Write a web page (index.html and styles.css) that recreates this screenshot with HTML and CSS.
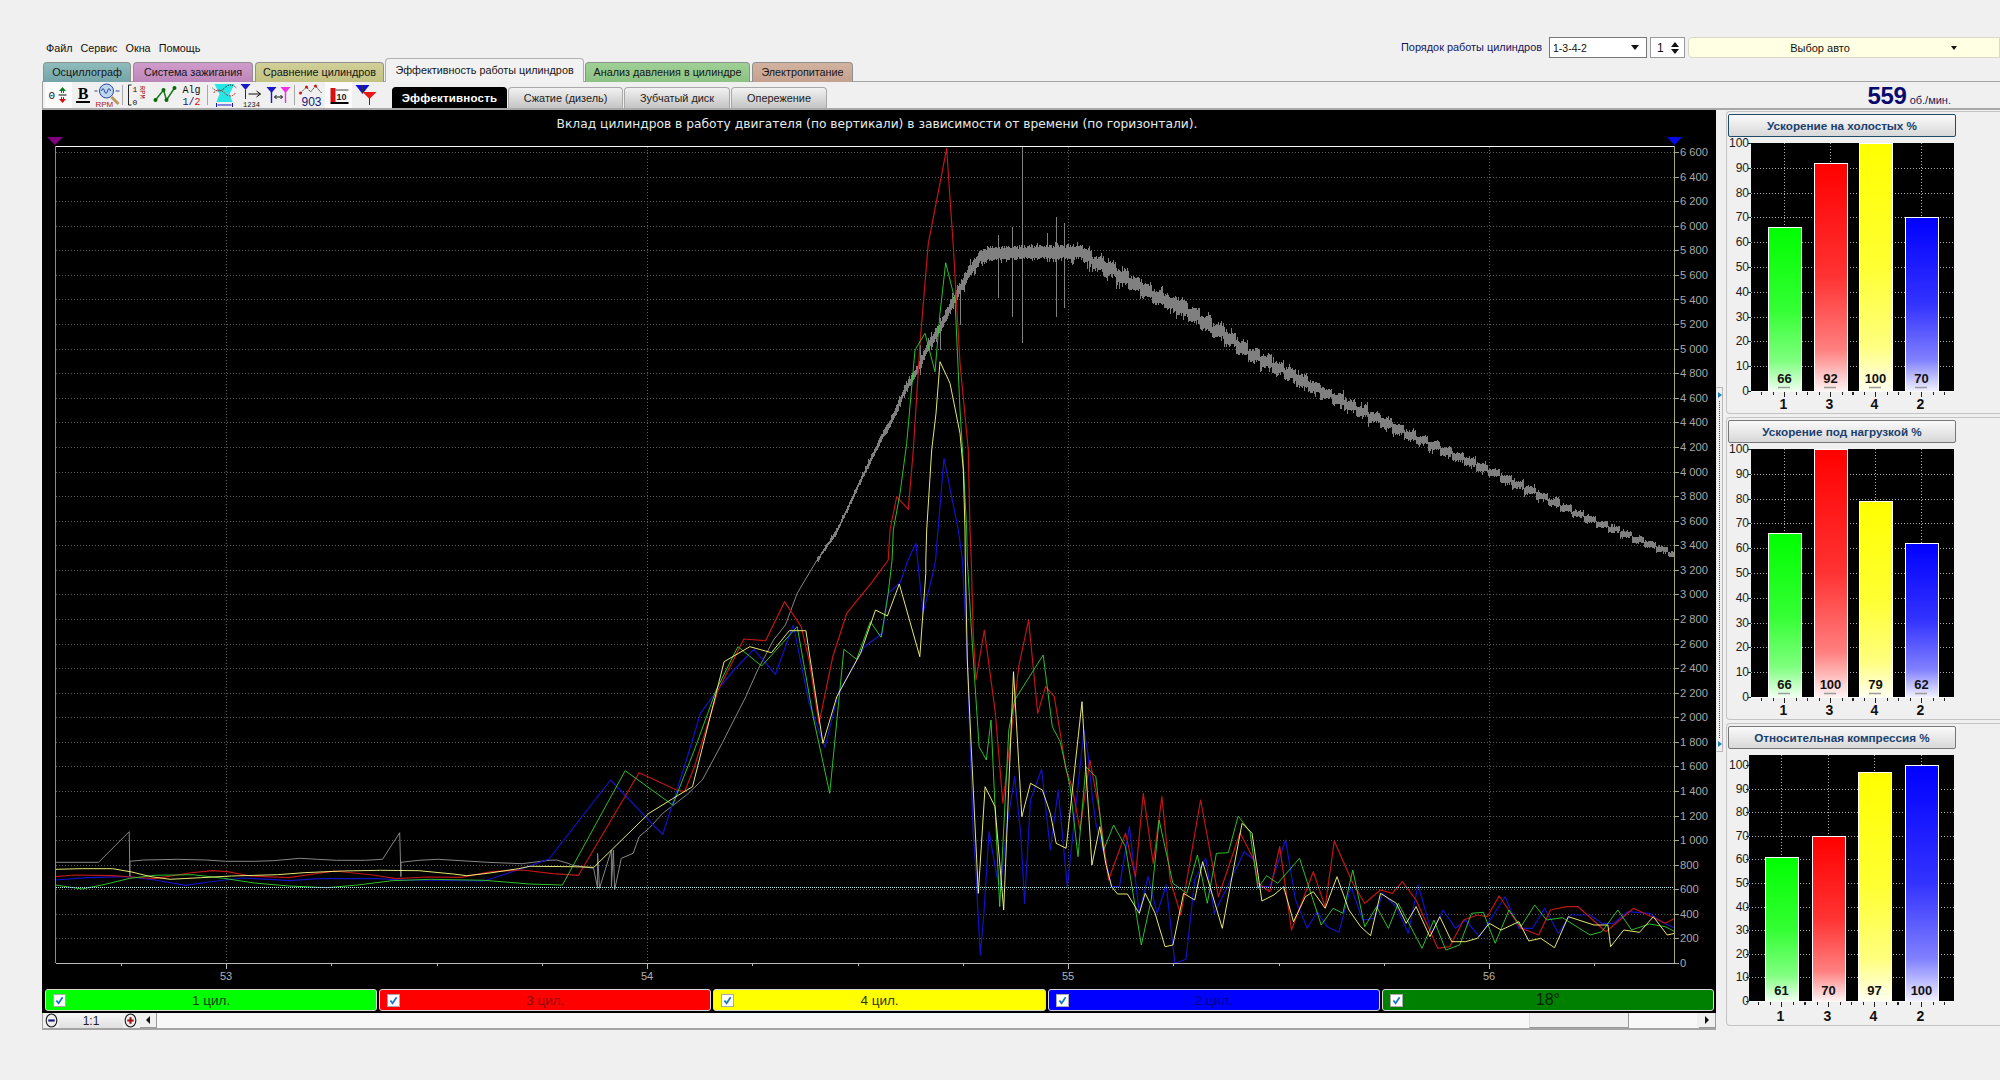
FILE: index.html
```html
<!DOCTYPE html>
<html lang="ru">
<head>
<meta charset="utf-8">
<title>Эффективность работы цилиндров</title>
<link rel="stylesheet" href="styles.css">
</head>
<body>
<div class="app">
  <header class="head">
    <div class="head-left">
      <nav class="menu"><span>Файл</span><span>Сервис</span><span>Окна</span><span>Помощь</span></nav>
      <div class="tabs">
        <div class="tab tab-osc">Осциллограф</div>
        <div class="tab tab-ign">Система зажигания</div>
        <div class="tab tab-cmp">Сравнение цилиндров</div>
        <div class="tab tab-active">Эффективность работы цилиндров</div>
        <div class="tab tab-prs">Анализ давления в цилиндре</div>
        <div class="tab tab-pwr">Электропитание</div>
      </div>
    </div>
    <div class="config">
      <span class="config-label">Порядок работы цилиндров</span>
      <div class="select"><span>1-3-4-2</span><i class="arrow-down"></i></div>
      <div class="spin"><span>1</span><div class="spin-btns"><i class="arrow-up"></i><i class="arrow-down"></i></div></div>
      <div class="car"><span class="car-text">Выбор авто</span><i class="arrow-down small"></i></div>
    </div>
  </header>

  <div class="toolrow">
    <div class="tools">
      <div class="tool on"><svg viewBox="0 0 26 26"><text x="3" y="17" class="ic-t">0</text><path d="M17 5l-3.500 4h7z" fill="#0a7a2a"/><path d="M17 21l-3.500-4h7z" fill="#d01010"/><path d="M16 9v2M18 9v2" stroke="#0a7a2a"/><path d="M13 13h8" stroke="#111"/><path d="M16 15v2M18 15v2" stroke="#d01010"/></svg></div>
      <div class="tool narrow"><svg viewBox="0 0 22 26"><text x="11" y="17" class="ic-b">B</text><path d="M4 20h14" stroke="#000" stroke-width="2"/></svg></div>
      <div class="tool"><svg viewBox="0 0 26 26"><path d="M17 15l7 7" stroke="#b89a60" stroke-width="3"/><circle cx="12" cy="9" r="7" fill="#bcd8ee" stroke="#30409a"/><path d="M0 9h3M21 9h4M7 9q1.500-5 3 0t3 0 3 0" fill="none" stroke="#30409a"/><text x="1" y="25" class="ic-rpm">RPM</text></svg></div>
      <i class="sep"></i>
      <div class="tool"><svg viewBox="0 0 26 26"><path d="M7 3H4v20h3" fill="none" stroke="#222"/><text x="8" y="10" class="ic-s">1</text><text x="8" y="23" class="ic-s">0</text><text transform="translate(15 4) rotate(90)" class="ic-rot">RPM</text></svg></div>
      <div class="tool"><svg viewBox="0 0 26 26"><path d="M4 18l8-10 3 10 8-12" fill="none" stroke="#1a7a1a" stroke-width="1.500"/><circle cx="4" cy="18" r="2" fill="#0a6a0a"/><circle cx="12" cy="8" r="2" fill="#0a6a0a"/><circle cx="15" cy="18" r="2" fill="#0a6a0a"/><circle cx="23" cy="6" r="2" fill="#0a6a0a"/></svg></div>
      <div class="tool"><svg viewBox="0 0 26 26"><text x="13" y="11" class="ic-alg">Alg</text><text x="13" y="23" class="ic-alg b">1/<tspan class="red">2</tspan></text></svg></div>
      <i class="sep gap-r"></i>
      <div class="tool"><svg viewBox="0 0 26 26"><path d="M3 2h20l-5 10 3 8H5l3-8z" fill="#26e6e6"/><path d="M1 6q6 6 12 0t12 0" fill="none" stroke="#111" stroke-dasharray="1 1"/><path d="M2 11q5-6 11 0t11 0" fill="none" stroke="#d02020" stroke-dasharray="2 1"/><path d="M5 21v4M21 21v4M6 23h14" stroke="#1818c0" fill="none"/></svg></div>
      <div class="tool"><svg viewBox="0 0 26 26"><path d="M2 2h10l-5 6z" fill="#1818c8"/><path d="M7 8v9" stroke="#1818c8"/><path d="M10 12h12M18 9l4 3-4 3" fill="none" stroke="#111"/><text x="13" y="25" class="ic-num">1234</text></svg></div>
      <div class="tool"><svg viewBox="0 0 26 26"><path d="M1 5h10l-5 6z" fill="#1818c8"/><path d="M6 10v11" stroke="#1818c8" stroke-width="1.400"/><path d="M15 5h10l-5 6z" fill="#f030e0"/><path d="M20 10v11" stroke="#f030e0" stroke-width="1.400"/><path d="M9 15h8M9 15l2-2M9 15l2 2M17 15l-2-2M17 15l-2 2" fill="none" stroke="#111"/></svg></div>
      <i class="sep gap-r"></i>
      <div class="tool"><svg viewBox="0 0 26 26"><path d="M2 11l6-6 4 5 5-6 6 7" fill="none" stroke="#444" stroke-dasharray="2 1"/><circle cx="2" cy="11" r="1.500" fill="#d01010"/><circle cx="8" cy="5" r="1.500" fill="#d01010"/><circle cx="17" cy="4" r="1.500" fill="#d01010"/><text x="13" y="24" class="ic-903">903</text></svg></div>
      <div class="tool on"><svg viewBox="0 0 26 26"><rect x="5" y="6" width="5" height="14" fill="#d81010"/><text x="11" y="18" class="ic-10">10</text><path d="M10 8h13" stroke="#444"/><path d="M5 21h18" stroke="#000" stroke-width="2"/></svg></div>
      <div class="tool"><svg viewBox="0 0 26 26"><path d="M3 3h14l-7 9z" fill="#1010d8"/><path d="M10 10h14l-7 7z" fill="#e81818"/><path d="M10 3v8M17 16v7" stroke="#333"/></svg></div>
    </div>
    <div class="subtabs">
      <div class="subtab active">Эффективность</div>
      <div class="subtab w1">Сжатие (дизель)</div>
      <div class="subtab w2">Зубчатый диск</div>
      <div class="subtab w3">Опережение</div>
    </div>
    <div class="rpm"><b>559</b> <span>об./мин.</span></div>
  </div>

  <main class="main">
    <section class="chart-panel">
      <svg id="plot" class="plot" viewBox="42 110 1674 879" preserveAspectRatio="none"></svg>
      <div class="legend">
        <div class="chip c-green"><i class="check"><svg viewBox="0 0 10 10"><path d="M1.500 5l2.500 3 4.500-6.500" fill="none" stroke="#1878c8" stroke-width="2"/></svg></i><span>1 цил.</span></div>
        <div class="chip c-red"><i class="check"><svg viewBox="0 0 10 10"><path d="M1.500 5l2.500 3 4.500-6.500" fill="none" stroke="#1878c8" stroke-width="2"/></svg></i><span>3 цил.</span></div>
        <div class="chip c-yellow"><i class="check"><svg viewBox="0 0 10 10"><path d="M1.500 5l2.500 3 4.500-6.500" fill="none" stroke="#1878c8" stroke-width="2"/></svg></i><span>4 цил.</span></div>
        <div class="chip c-blue"><i class="check"><svg viewBox="0 0 10 10"><path d="M1.500 5l2.500 3 4.500-6.500" fill="none" stroke="#1878c8" stroke-width="2"/></svg></i><span>2 цил.</span></div>
        <div class="chip c-dark"><i class="check"><svg viewBox="0 0 10 10"><path d="M1.500 5l2.500 3 4.500-6.500" fill="none" stroke="#1878c8" stroke-width="2"/></svg></i><span>18°</span></div>
      </div>
      <div class="scrollrow">
        <div class="zoom-btn"><svg viewBox="0 0 12 14"><ellipse cx="6" cy="7" rx="5" ry="6" fill="#eee" stroke="#111"/><path d="M3 7h6" stroke="#18187a" stroke-width="2"/></svg></div>
        <div class="zoom-val">1:1</div>
        <div class="zoom-btn"><svg viewBox="0 0 12 14"><ellipse cx="6" cy="7" rx="5" ry="6" fill="#eee" stroke="#111"/><path d="M3 7h6M6 4v6" stroke="#a01010" stroke-width="2"/></svg></div>
        <div class="sb-btn"><i class="arrow-left"></i></div>
        <div class="sb-track"><div class="sb-thumb"></div></div>
        <div class="sb-btn"><i class="arrow-right"></i></div>
      </div>
    </section>

    <div class="splitter"><i class="sp-arrow"></i><i class="sp-dots"></i><i class="sp-arrow"></i></div>

    <aside class="side">
      <section class="panel">
        <div class="cap cap-dark">Ускорение на холостых %</div>
        <svg id="bars1" class="bars" viewBox="1727 137 273 276"></svg>
      </section>
      <section class="panel">
        <div class="cap">Ускорение под нагрузкой %</div>
        <svg id="bars2" class="bars" viewBox="1727 443 273 276"></svg>
      </section>
      <section class="panel">
        <div class="cap">Относительная компрессия %</div>
        <svg id="bars3" class="bars" viewBox="1727 749 273 276"></svg>
      </section>
    </aside>
  </main>
</div>
<script src="chart.js"></script>
</body>
</html>
```
FILE: styles.css
```css
* { box-sizing: border-box; }
html, body { margin: 0; padding: 0; background: #f0f0f0; overflow: hidden; }
body { font-family: "Liberation Sans", Arial, sans-serif; font-size: 11px; color: #111; }
i { display: block; font-style: normal; }
.app { width: 2000px; height: 1080px; display: flex; flex-direction: column; }

.head { height: 82px; display: flex; justify-content: space-between; border-bottom: 1px solid #a4a4a4; margin-left: 42px; }
.head-left { display: flex; flex-direction: column; justify-content: flex-end; padding-left: 1px; }
.menu { display: flex; gap: 8px; padding-left: 3px; margin-bottom: 3px; height: 14px; line-height: 14px; font-size: 10.8px; }
.tabs { display: flex; align-items: flex-end; gap: 2px; margin-bottom: -1px; }
.tab { height: 20px; line-height: 19px; text-align: center; border: 1px solid #909090; border-bottom: none; border-radius: 4px 4px 0 0; color: #151515; white-space: nowrap; font-size: 10.8px; }
.tab-osc { width: 88px; background: linear-gradient(#8fbcbc, #74a4a8); }
.tab-ign { width: 120px; background: linear-gradient(#d09ccc, #bd86b8); }
.tab-cmp { width: 129px; background: linear-gradient(#d0d098, #c2c282); }
.tab-active { width: 199px; height: 24px; line-height: 22px; background: #f2f2f2; border-color: #b0b0b0; margin: 0 -1px 0 -1px; }
.tab-prs { width: 165px; background: linear-gradient(#9fd096, #8cc284); }
.tab-pwr { width: 101px; background: linear-gradient(#d2b2a0, #c4a18e); }

.config { display: flex; align-items: flex-start; padding-top: 37px; }
.config-label { margin-top: 4px; margin-right: 7px; color: #14145a; font-size: 10.9px; white-space: nowrap; }
.select { width: 98px; height: 21px; background: #fff; border: 1px solid #777; display: flex; align-items: center; justify-content: space-between; padding: 0 7px 0 3px; margin-right: 3px; font-size: 10.5px; }
.spin { width: 35px; height: 21px; background: #fff; border: 1px solid #999; display: flex; align-items: center; justify-content: space-between; padding: 0 5px 0 6px; margin-right: 3px; font-size: 12px; }
.spin-btns { display: flex; flex-direction: column; gap: 2px; }
.car { width: 312px; height: 21px; background: #ffffe4; border: 1px solid #d8d8c8; border-radius: 4px 0 0 4px; display: flex; align-items: center; }
.car-text { width: 262px; text-align: center; }
.arrow-down { width: 0; height: 0; border: 4px solid transparent; border-top: 5px solid #111; border-bottom: 0; }
.arrow-down.small { border-width: 3px; border-top-width: 4px; border-bottom-width: 0; }
.arrow-up { width: 0; height: 0; border: 4px solid transparent; border-bottom: 5px solid #111; border-top: 0; }

.toolrow { height: 28px; margin-left: 42px; padding-left: 2px; display: flex; align-items: stretch; border-bottom: 2px solid #a8a8a8; border-left: 1px solid #a0a0a0; }
.tools { display: flex; align-items: center; width: 347px; }
.tool { width: 27px; height: 26px; flex: none; }
.tool.on { background: #fbfbfb; }
.tool.narrow { width: 22px; }
.tool svg { display: block; width: 100%; height: 100%; }
.sep { width: 1px; height: 20px; background: #a8a8a8; margin: 0 1px; flex: none; }
.sep.gap-r { margin-right: 3px; margin-left: 2px; }
.ic-t { font: 11px "Liberation Mono", monospace; fill: #111; }
.ic-b { font: bold 16px "Liberation Serif", serif; text-anchor: middle; fill: #000; }
.ic-rpm { font: 8px "Liberation Sans", sans-serif; fill: #b01818; }
.ic-s { font: 8px "Liberation Mono", monospace; fill: #111; }
.ic-rot { font: 7px "Liberation Mono", monospace; fill: #a01818; }
.ic-alg { font: 10px "Liberation Mono", monospace; text-anchor: middle; fill: #111; }
.ic-alg.b { fill: #18187a; }
.red { fill: #d01010; }
.ic-num { font: 7px "Liberation Mono", monospace; text-anchor: middle; fill: #111; }
.ic-903 { font: 12px "Liberation Sans", sans-serif; text-anchor: middle; fill: #18187a; }
.ic-10 { font: bold 9px "Liberation Sans", sans-serif; fill: #222; }

.subtabs { display: flex; align-items: flex-end; gap: 1px; }
.subtab { height: 21px; line-height: 20px; text-align: center; border: 1px solid #a8a8a8; border-bottom: 0; border-radius: 4px 4px 0 0; background: linear-gradient(#f2f2f2, #c4c4c4); color: #222; font-size: 10.9px; }
.subtab.active { width: 115px; background: #000; border-color: #000; color: #fff; font-weight: bold; font-size: 11.5px; letter-spacing: .2px; }
.subtab.w1 { width: 115px; }
.subtab.w2 { width: 106px; }
.subtab.w3 { width: 96px; }
.rpm { margin-left: auto; padding-right: 49px; color: #0a0a6e; white-space: nowrap; height: 26px; line-height: 27px; }
.rpm b { font-size: 24px; letter-spacing: -.3px; }
.rpm span { font-size: 11px; color: #18185a; }

.main { display: flex; align-items: flex-start; height: 920px; margin-left: 42px; }
.chart-panel { width: 1674px; flex: none; background: #000; display: flex; flex-direction: column; }
.plot { display: block; width: 1674px; height: 879px; background: #000; }
.grid-h, .grid-v { stroke: #5c5c5c; stroke-dasharray: 1 2; shape-rendering: crispEdges; }
.grid-rpm { stroke: #b0eeee; stroke-dasharray: 1 1; shape-rendering: crispEdges; }
.ax-top { stroke: #f4f4f4; shape-rendering: crispEdges; }
.ax-left { stroke: #6ba56b; shape-rendering: crispEdges; }
.ax-right, .ax-rtick { stroke: #a8a880; shape-rendering: crispEdges; }
.ax-bottom, .ax-btick { stroke: #b8b8b8; shape-rendering: crispEdges; }
.ylab { font: 11.2px "Liberation Sans", sans-serif; fill: #a8a8a8; }
.xlab { font: 11px "Liberation Sans", sans-serif; fill: #b4b4b4; text-anchor: middle; }
.title { font: 12.25px "DejaVu Sans", sans-serif; fill: #e4ecec; text-anchor: middle; }
.trace { fill: none; stroke-width: 1.200; stroke-linejoin: round; }
.trace-thin { stroke-width: .9; }
.noise { stroke: #808080; fill: none; shape-rendering: crispEdges; }
.thin-gray { stroke: #868686; fill: none; stroke-width: 1; }
.mark-p { fill: #800080; }
.mark-b { fill: #0808e8; }

.legend { height: 24px; display: grid; grid-template-columns: repeat(5, 1fr); gap: 2px; padding: 0 2px 2px 3px; background: #000; }
.chip { position: relative; border: 1px solid #d8d8d8; border-radius: 3px; display: flex; align-items: center; justify-content: center; font-size: 13.5px; }
.chip .check { position: absolute; left: 7px; top: 4px; width: 13px; height: 13px; background: #fff; border: 1px solid #aaa; padding: 1px; }
.chip .check svg { display: block; width: 100%; height: 100%; }
.c-green { background: #00ff00; color: #0b3b0b; }
.c-red { background: #ff0000; color: #8a0a0a; }
.c-yellow { background: #ffff00; color: #333300; }
.c-blue { background: #0000ff; color: #00008a; }
.c-dark { background: #008000; color: #062406; font-size: 16px; }

.scrollrow { height: 17px; background: #f0f0f0; border-bottom: 2px solid #a4a4a4; border-left: 1px solid #a4a4a4; display: flex; align-items: stretch; padding-left: 1px; }
.zoom-btn { width: 15px; padding: 0 1px; }
.zoom-btn svg { display: block; width: 100%; height: 100%; }
.zoom-val { width: 64px; background: linear-gradient(#f8f8f8, #e0e0e0); text-align: center; font-size: 12px; line-height: 16px; color: #222; }
.sb-btn { width: 17px; flex: none; background: #f0f0f0; border-right: 1px solid #999; border-bottom: 1px solid #999; display: flex; align-items: center; justify-content: center; margin-left: 2px; }
.sb-track { flex: 1; background: #f8f8f8; display: flex; justify-content: flex-end; padding-right: 68px; }
.sb-thumb { width: 100px; background: #f0f0f0; border-right: 1px solid #999; border-bottom: 1px solid #999; border-left: 1px solid #ddd; }
.arrow-left { width: 0; height: 0; border: 4px solid transparent; border-right: 4px solid #111; border-left: 0; }
.arrow-right { width: 0; height: 0; border: 4px solid transparent; border-left: 4px solid #111; border-right: 0; }

.splitter { width: 7px; height: 365px; margin-top: 277px; flex: none; border: 1px solid #b8b8b8; border-left-color: #e8e8e8; display: flex; flex-direction: column; align-items: center; padding: 4px 0; gap: 3px; }
.sp-arrow { width: 0; height: 0; border: 3px solid transparent; border-left: 4px solid #2080b0; border-right: 0; flex: none; }
.sp-dots { flex: 1; width: 1px; border-left: 1px dotted #4a4a4a; }

.side { width: 274px; flex: none; margin-left: 3px; padding-top: 1px; display: flex; flex-direction: column; gap: 3px; }
.panel { height: 303px; border: 1px solid #c4c4c4; border-right: 0; border-radius: 4px 0 0 4px; padding: 2px 0 0 1px; }
.cap { width: 228px; height: 23px; line-height: 21px; text-align: center; font-weight: bold; font-size: 11.7px; color: #1a3f6e; border: 1px solid #777; border-radius: 2px; background: linear-gradient(#fafafa, #d8d8d8); }
.cap-dark { border-color: #1e4c68; }
.bars { display: block; width: 273px; height: 276px; margin-left: -1px; }
.b-num { font: 12px "Liberation Sans", sans-serif; fill: #1a1a1a; text-anchor: end; }
.b-val { font: bold 13px "Liberation Sans", sans-serif; fill: #111; text-anchor: middle; }
.b-cat { font: bold 14px "Liberation Sans", sans-serif; fill: #111; text-anchor: middle; }
.b-grid { stroke: #b0b0b0; stroke-dasharray: 1 2; shape-rendering: crispEdges; }
.b-axis { stroke: #f8f8f8; shape-rendering: crispEdges; }
.b-tick { stroke: #222; shape-rendering: crispEdges; }
.b-bar { stroke: #fff; shape-rendering: crispEdges; }
.b-dash { stroke: #9a9a9a; stroke-width: 1.500; }
```
FILE: chart.js
```js
(function () {
  var NS = 'http://www.w3.org/2000/svg';
  function el(parent, name, attrs, text) {
    var e = document.createElementNS(NS, name);
    for (var k in attrs) e.setAttribute(k, attrs[k]);
    if (text !== undefined) e.textContent = text;
    parent.appendChild(e);
    return e;
  }
  // trace samples were read from four chart windows with their own scales
  function win(x0, y0, sx, sy) {
    return function (p) {
      var out = [];
      for (var i = 0; i < p.length; i += 2) out.push([x0 + p[i] / sx, y0 + p[i + 1] / sy]);
      return out;
    };
  }
  var A = win(40, 780, 2.613, 3), B = win(560, 560, 2.529, 3), C = win(1080, 680, 2.529, 3), D = win(800, 130, 3, 3);

  var red = [].concat(
    A([40,290,90,285,190,287,240,291,300,296,390,279,450,272,490,275,550,288,650,293,770,273,870,285,930,296,1010,291,1100,292,1180,275,1260,270,1340,281,1407,286]),
    B([200,638,295,690,315,695,340,620,400,390,465,237,520,242,568,125,610,200,630,300,655,490,690,290,725,160,790,65,830,0]),
    D([270,1200,290,1100,325,1138,340,960,360,640,385,340,440,55,445,130,460,350,480,700,505,960,510,1200]),
    B([1040,0,1045,220,1052,360,1073,210,1100,450,1120,730,1145,480,1160,320,1185,180,1208,460,1228,380,1250,410,1280,630,1295,680,1315,810]),
    C([25,240,50,400,72,600,115,460,140,590,160,340,185,550,207,350,228,600,255,705,305,360,350,650,405,458,440,540,450,610,480,635,505,500,535,750,590,575,620,680,643,483,690,610,720,670,760,630,790,640,815,605,850,660,905,805,935,800,970,720,1005,705,1030,710,1060,648,1115,745,1160,765,1190,690,1230,680,1260,680,1330,755,1400,685,1480,730,1505,715])
  );
  var green = [].concat(
    A([40,315,110,327,170,313,235,295,300,286,400,284,480,295,560,309,650,318,750,323,830,315,920,302,1020,298,1160,301,1280,312,1365,315]),
    B([165,632,285,735,340,570,395,390,450,260,510,318,600,200,640,470,682,700,718,268,750,298,785,185,812,232,830,100,840,0]),
    D([280,1200,300,1090,320,940,345,660,375,610,405,725,420,550,437,398,465,510,480,840,490,1000,500,1200]),
    B([1030,0,1040,200,1060,560,1078,600,1090,480,1112,1040,1135,510,1150,420,1190,345,1222,285,1245,500,1265,545,1290,680,1310,890]),
    C([15,260,40,290,60,510,85,435,115,500,155,795,180,660,200,420,235,610,270,640,297,525,322,670,345,520,375,518,400,408,430,455,450,625,472,587,500,610,555,535,610,735,640,685,665,700,690,570,720,740,750,680,780,745,805,670,865,805,895,720,925,810,960,795,990,700,1020,697,1050,790,1085,690,1115,740,1150,675,1180,720,1220,713,1290,765,1320,755,1360,690,1395,750,1440,732,1480,740,1505,755])
  );
  var blue = [].concat(
    A([40,300,125,293,230,290,300,300,380,316,440,306,530,294,600,298,650,302,730,296,880,296,950,300,1160,303,1270,262,1330,237]),
    B([128,660,240,800,260,823,285,730,320,600,355,460,395,395,440,330,490,268,545,343,590,195,630,430,670,562,705,395,770,260,815,220,830,100,860,68,880,0,900,-50,918,160,945,30,950,0]),
    D([414,1200,432,985,475,1200]),
    B([1018,0,1030,300,1045,820,1050,900,1063,1185,1072,1060,1085,815,1105,950,1115,975,1130,800,1150,650,1165,820,1175,1030,1190,720,1218,628,1240,870,1260,690,1283,980]),
    C([10,150,20,220,30,340,40,430,65,540,80,620,100,620,125,440,150,700,172,590,195,700,218,615,240,850,268,838,290,600,318,535,340,700,385,590,415,515,440,540,450,620,480,620,520,480,545,660,575,745,600,695,625,740,655,757,685,620,715,720,745,715,765,640,800,680,830,760,855,615,890,760,918,690,950,745,975,720,1010,770,1075,650,1110,745,1145,745,1175,685,1210,760,1240,705,1290,705,1320,730,1350,730,1385,695,1440,700,1470,725,1505,745])
  );
  var yellow = [].concat(
    A([40,268,110,266,190,266,240,276,290,290,340,298,420,293,500,288,620,284,690,278,790,273,890,271,990,272,1080,282,1115,287,1170,280,1250,266,1280,259,1390,260,1447,262]),
    B([225,760,300,705,335,680,415,305,480,260,535,278,580,212,622,212,665,550,700,410,760,280,798,150,828,168,858,72,910,290,925,40,925,0]),
    D([380,1200,395,960,408,850,420,695,450,760,480,910,490,1020,495,1200]),
    B([1025,0,1030,300,1040,560,1058,1000,1075,680,1100,740,1122,1050,1147,335,1168,770,1190,670,1220,690,1240,760,1255,850,1280,865]),
    C([5,65,15,270,30,555,50,440,65,550,80,620,95,642,120,642,150,700,165,640,190,700,215,800,235,795,262,640,290,660,310,545,360,745,410,430,435,460,460,663,490,645,515,620,540,725,570,650,590,635,620,685,650,590,680,690,710,740,735,767,760,640,800,670,825,730,850,680,885,770,910,710,940,785,975,785,1005,775,1035,730,1065,750,1110,725,1135,783,1165,775,1200,803,1235,710,1300,735,1335,735,1342,800,1375,750,1415,757,1450,710,1485,765,1505,760])
  );
  var grayThin = [].concat(
    A([40,247,153,247,233,155,235,290,235,244,270,240,360,238,435,240,485,244,560,244,610,242,680,235,725,238,775,241,850,241,895,238,940,158,943,290,943,247,990,241,1040,238,1100,242,1170,247,1260,251,1330,241,1350,240,1380,250]),
    B([30,915,85,925,95,985,95,880,100,985,130,870,130,980,135,870,138,990,155,895,185,880,200,830,225,805,260,760,320,705,360,660,410,550,470,410,500,330,540,240,570,195,600,100,650,0])
  );
  function pts(a) { return a.map(function (p) { return p[0].toFixed(1) + ',' + p[1].toFixed(1); }).join(' '); }

  var plot = document.getElementById('plot');
  var yZero = 963, yStep = 24.575, xMid = 105.25, x53 = 226, left = 55.5, right = 1674.5;

  // grid
  for (var i = 1; i <= 33; i++) {
    var gy = Math.round(yZero - i * yStep) + 0.5;
    el(plot, 'line', { 'class': 'grid-h', x1: left, x2: right, y1: gy, y2: gy });
  }
  [226, 647, 1068, 1489].forEach(function (x) {
    el(plot, 'line', { 'class': 'grid-v', x1: x + .5, x2: x + .5, y1: 147, y2: 963 });
  });

  // tacho trace: a noisy band whose width grows with speed; past the peak it falls in small steps
  el(plot, 'polyline', { 'class': 'thin-gray', points: pts(grayThin) });
  var centre = [[817,560],[837,530],[862,477],[880,440],[893,417],[903,393],[917,370],[927,347],[940,327],[957,293],[970,270],[980,257],[993,253],[1080,252],[1093,262],[1107,267],[1128,280],[1153,295],[1180,307],[1200,319],[1250,353],[1327,394],[1403,432],[1492,472],[1582,516],[1675,555]];
  var amp = [[817,2.500],[860,3.500],[890,5],[920,6],[960,8],[990,8],[1110,9],[1200,9],[1300,7.500],[1400,6],[1500,5],[1675,3.500]];
  function lerp(t, x) {
    for (var j = 1; j < t.length; j++) if (x <= t[j][0]) {
      var a = t[j - 1], b = t[j];
      return a[1] + (b[1] - a[1]) * (x - a[0]) / (b[0] - a[0]);
    }
    return t[t.length - 1][1];
  }
  var seed = 20317;
  function rnd() { seed = (seed * 1664525 + 1013904223) % 4294967296; return seed / 4294967296; }
  var d = '';
  for (var x = 817; x < 1675; x++) {
    var stepped = x > 1085 ? Math.floor(x / 12) * 12 + 6 : x;
    var c = lerp(centre, stepped), h = lerp(amp, x);
    var up = h * (.5 + .45 * rnd()), down = h * (.5 + .45 * rnd());
    if (rnd() < .12) up += h * .5;
    if (rnd() < .12) down += h * .5;
    d += 'M' + (x + .5) + ' ' + (c - up).toFixed(0) + 'V' + (c + down).toFixed(0);
  }
  [[1022,146,343],[998,235,298],[1012,227,317],[1056,217,317],[1064,223,308],[1047,233,262],[1089,246,272],[920,345,375],[940,318,350],[960,285,325]].forEach(function (s) {
    d += 'M' + (s[0] + .5) + ' ' + s[1] + 'V' + s[2];
  });
  el(plot, 'path', { 'class': 'noise', d: d });

  // cylinder traces
  [[blue, '#1212c8', 'trace'], [red, '#c01616', 'trace'], [green, '#32d232', 'trace trace-thin'], [yellow, '#ffff80', 'trace trace-thin']].forEach(function (t) {
    el(plot, 'polyline', { 'class': t[2], stroke: t[1], points: pts(t[0]) });
  });

  el(plot, 'line', { 'class': 'grid-rpm', x1: left, x2: right, y1: 887.5, y2: 887.5 });

  // axes
  el(plot, 'line', { 'class': 'ax-top', x1: left, x2: right, y1: 146.5, y2: 146.5 });
  el(plot, 'line', { 'class': 'ax-left', x1: left, x2: left, y1: 146, y2: 963 });
  el(plot, 'line', { 'class': 'ax-right', x1: right, x2: right, y1: 146, y2: 963 });
  el(plot, 'line', { 'class': 'ax-bottom', x1: left, x2: right, y1: 963.5, y2: 963.5 });
  for (var n = 0; n <= 33; n++) {
    var ly = yZero - n * yStep, ry = Math.round(ly) + .5, v = n * 200;
    el(plot, 'line', { 'class': 'ax-rtick', x1: right, x2: right + 4, y1: ry, y2: ry });
    var label = v >= 1000 ? Math.floor(v / 1000) + ' ' + ('00' + (v % 1000)).slice(-3) : String(v);
    el(plot, 'text', { 'class': 'ylab', x: 1680, y: (ly + 4).toFixed(1) }, label);
  }
  for (var k = -1; k <= 13; k++) {
    var tx = Math.round(x53 + k * xMid);
    if (tx < 56 || tx > 1674) continue;
    var major = (k % 4 === 0);
    el(plot, 'line', { 'class': 'ax-btick', x1: tx + .5, x2: tx + .5, y1: 963, y2: major ? 969 : 966 });
  }
  [[53, 226], [54, 647], [55, 1068], [56, 1489]].forEach(function (t) {
    el(plot, 'text', { 'class': 'xlab', x: t[1], y: 980 }, t[0]);
  });
  el(plot, 'text', { 'class': 'title', x: 877, y: 128 }, 'Вклад цилиндров в работу двигателя (по вертикали) в зависимости от времени (по горизонтали).');
  el(plot, 'path', { 'class': 'mark-p', d: 'M47 137H63L55 145Z' });
  el(plot, 'path', { 'class': 'mark-b', d: 'M1667 137H1682L1674.500 145Z' });

  // bar charts
  var COLORS = ['#00ff00', '#ff0000', '#ffff00', '#0000ff'];
  var LIGHT = [['#33ff33', '#80ff80', '#f0fff0'], ['#ff3333', '#ff8080', '#fff2f2'], ['#ffff33', '#ffff80', '#fffff0'], ['#3333ff', '#8080ff', '#f0f0ff']];
  function barChart(id, c) {
    var s = document.getElementById(id), defs = el(s, 'defs', {});
    COLORS.forEach(function (col, i) {
      var g = el(defs, 'linearGradient', { id: id + 'g' + i, x1: 0, y1: 0, x2: 0, y2: 1 });
      el(g, 'stop', { offset: '0', 'stop-color': col });
      el(g, 'stop', { offset: '.5', 'stop-color': LIGHT[i][0] });
      el(g, 'stop', { offset: '.82', 'stop-color': LIGHT[i][1] });
      el(g, 'stop', { offset: '1', 'stop-color': LIGHT[i][2] });
    });
    var unit = (c.zero - c.full) / 100;
    el(s, 'rect', { x: c.left, y: c.top, width: 1954 - c.left, height: c.bottom - c.top, fill: '#000' });
    for (var t = 0; t <= 100; t += 10) {
      var y = c.zero - t * unit, ry = Math.round(y) + .5;
      if (t > 0 && t < 100) el(s, 'line', { 'class': 'b-grid', x1: c.left, x2: 1954, y1: ry, y2: ry });
      el(s, 'line', { 'class': 'b-tick', x1: c.left - 3, x2: c.left, y1: ry, y2: ry });
      el(s, 'text', { 'class': 'b-num', x: c.left - 2 + c.numShift, y: (y + 4).toFixed(1) }, t);
    }
    c.x.forEach(function (bx, i) {
      var cx = bx + 16;
      el(s, 'line', { 'class': 'b-grid', x1: cx + .5, x2: cx + .5, y1: c.top, y2: c.bottom });
      var h = c.values[i] * unit, by = Math.round(c.zero - h);
      el(s, 'rect', { 'class': 'b-bar', x: bx + .5, y: by + .5, width: 33, height: Math.round(c.zero) - by - .5, fill: 'url(#' + id + 'g' + i + ')' });
      el(s, 'text', { 'class': 'b-val', x: cx + .5, y: c.valY }, c.values[i]);
      if (c.dash) el(s, 'line', { 'class': 'b-dash', x1: cx - 6, x2: cx + 6, y1: c.zero - 3.5, y2: c.zero - 3.5 });
      el(s, 'line', { 'class': 'b-tick', x1: cx + .5, x2: cx + .5, y1: c.bottom, y2: c.bottom + 5 });
      [-23, -11, 12, 23].forEach(function (o) {
        el(s, 'line', { 'class': 'b-tick', x1: cx + o + .5, x2: cx + o + .5, y1: c.bottom, y2: c.bottom + 3 });
      });
      el(s, 'text', { 'class': 'b-cat', x: cx - .5, y: c.catY }, c.names[i]);
    });
    el(s, 'line', { 'class': 'b-axis', x1: c.left, x2: 1954, y1: c.bottom - .5, y2: c.bottom - .5 });
  }
  var x1 = [1768, 1814, 1859, 1905], names = [1, 3, 4, 2];
  barChart('bars1', { left: 1751, top: 143, bottom: 392, zero: 391, full: 143, x: x1, names: names, values: [66, 92, 100, 70], valY: 383, catY: 409, dash: true, numShift: 0 });
  barChart('bars2', { left: 1751, top: 449, bottom: 698, zero: 697, full: 449, x: x1, names: names, values: [66, 100, 79, 62], valY: 689, catY: 715, dash: true, numShift: 0 });
  barChart('bars3', { left: 1749, top: 755, bottom: 1002, zero: 1001, full: 765, x: [1765, 1812, 1858, 1905], names: names, values: [61, 70, 97, 100], valY: 995, catY: 1021, dash: false, numShift: 2 });
})();
```
